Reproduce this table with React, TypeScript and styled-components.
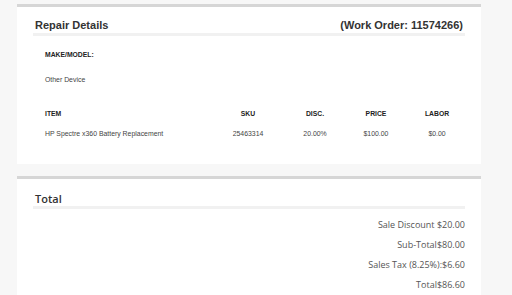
import styled, { createGlobalStyle } from "styled-components";

const GlobalStyle = createGlobalStyle`
  html, body {
    margin: 0;
    padding: 0;
    background: #f7f7f7;
  }
  * {
    box-sizing: border-box;
  }
`;

const StyledPage = styled.div`
  padding: 4px 0 0 17px;
  display: flex;
  flex-direction: column;
  gap: 12px;
  font-family: "Liberation Sans", Arial, sans-serif;
`;

const StyledCard = styled.section`
  width: 464px;
  background: #ffffff;
  border-top: 3px solid #d6d6d6;
  padding: 0 16px 25px;
`;

const StyledCardHead = styled.div<{ $top: number }>`
  display: flex;
  justify-content: space-between;
  align-items: flex-end;
  padding: ${(p) => p.$top}px 2px 0;
  border-bottom: 3px solid #f1f1f1;
`;

const StyledTitle = styled.h2`
  margin: 0;
  font-size: 11px;
  line-height: 15px;
  font-weight: 700;
  color: #333333;
`;

const StyledSoftTitle = styled(StyledTitle)`
  font-family: "Open Sans", "Liberation Sans", sans-serif;
  font-weight: 600;
`;

const StyledMeta = styled.div`
  padding: 14px 12px 0;
`;

const StyledLabel = styled.div`
  font-size: 6.8px;
  line-height: 10px;
  font-weight: 700;
  color: #222222;
`;

const StyledValue = styled.div`
  margin-top: 15px;
  font-size: 6.9px;
  line-height: 10px;
  color: #444444;
`;

const StyledTable = styled.div`
  margin: 24px 0 0 12px;
  display: grid;
  grid-template-columns: 169px 68px 66px 56px 66px;
  row-gap: 10px;
  line-height: 10px;
`;

const StyledCell = styled.div<{ $head?: boolean; $left?: boolean }>`
  text-align: ${(p) => (p.$left ? "left" : "center")};
  font-weight: ${(p) => (p.$head ? 700 : 400)};
  font-size: ${(p) => (p.$head ? "6.8px" : "6.9px")};
  color: ${(p) => (p.$head ? "#222222" : "#444444")};
  white-space: nowrap;
`;

const StyledTotals = styled.div`
  margin-top: 6px;
  display: flex;
  flex-direction: column;
  align-items: flex-end;
  font-family: "Open Sans", "Liberation Sans", sans-serif;
  font-size: 9px;
  line-height: 20px;
  color: #555555;
`;

const columns = ["ITEM", "SKU", "DISC.", "PRICE", "LABOR"];
const row = ["HP Spectre x360 Battery Replacement", "25463314", "20.00%", "$100.00", "$0.00"];
const totals = [
  "Sale Discount $20.00",
  "Sub-Total$80.00",
  "Sales Tax (8.25%):$6.60",
  "Total$86.60",
];

export default function App() {
  return (
    <>
      <GlobalStyle />
      <StyledPage>
        <StyledCard>
          <StyledCardHead $top={11}>
            <StyledTitle>Repair Details</StyledTitle>
            <StyledTitle>(Work Order: 11574266)</StyledTitle>
          </StyledCardHead>
          <StyledMeta>
            <StyledLabel>MAKE/MODEL:</StyledLabel>
            <StyledValue>Other Device</StyledValue>
          </StyledMeta>
          <StyledTable>
            {columns.map((c, i) => (
              <StyledCell key={c} $head $left={i === 0}>
                {c}
              </StyledCell>
            ))}
            {row.map((v, i) => (
              <StyledCell key={v} $left={i === 0}>
                {v}
              </StyledCell>
            ))}
          </StyledTable>
        </StyledCard>
        <StyledCard>
          <StyledCardHead $top={12}>
            <StyledSoftTitle>Total</StyledSoftTitle>
          </StyledCardHead>
          <StyledTotals>
            {totals.map((t) => (
              <div key={t}>{t}</div>
            ))}
          </StyledTotals>
        </StyledCard>
      </StyledPage>
    </>
  );
}
